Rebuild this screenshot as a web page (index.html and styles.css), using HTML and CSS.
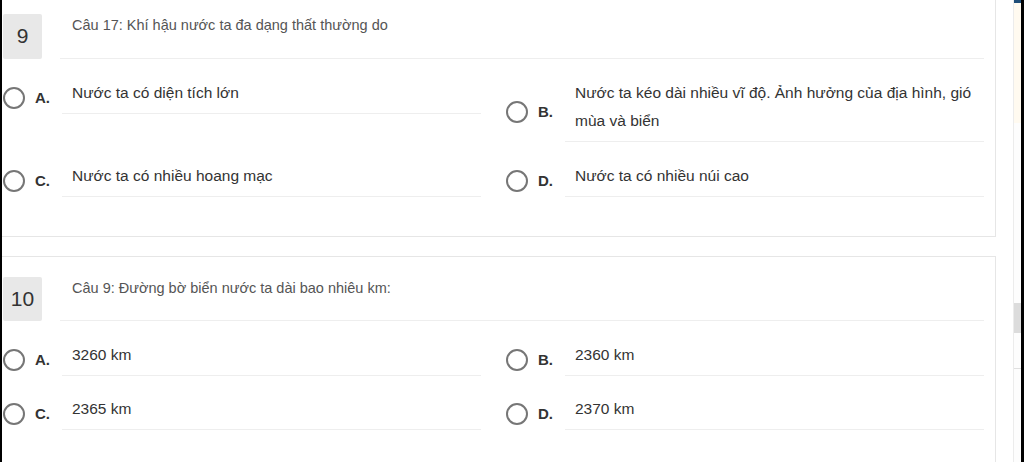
FILE: index.html
```html
<!DOCTYPE html>
<html lang="vi">
<head>
<meta charset="utf-8">
<title>Quiz</title>
<link rel="stylesheet" href="styles.css">
</head>
<body>
<div class="page">
  <div class="edge-left"></div>
  <main class="main">
    <section class="card card-first">
      <div class="q-head">
        <div class="q-num">9</div>
        <div class="q-text">Câu 17: Khí hậu nước ta đa dạng thất thường do</div>
      </div>
      <div class="options">
        <div class="opt">
          <span class="radio"></span><span class="letter">A.</span>
          <div class="opt-text">Nước ta có diện tích lớn</div>
        </div>
        <div class="opt">
          <span class="radio"></span><span class="letter">B.</span>
          <div class="opt-text">Nước ta kéo dài nhiều vĩ độ. Ảnh hưởng của địa hình, gió mùa và biển</div>
        </div>
        <div class="opt">
          <span class="radio"></span><span class="letter">C.</span>
          <div class="opt-text">Nước ta có nhiều hoang mạc</div>
        </div>
        <div class="opt">
          <span class="radio"></span><span class="letter">D.</span>
          <div class="opt-text">Nước ta có nhiều núi cao</div>
        </div>
      </div>
    </section>
    <section class="card card-second">
      <div class="q-head">
        <div class="q-num">10</div>
        <div class="q-text">Câu 9: Đường bờ biển nước ta dài bao nhiêu km:</div>
      </div>
      <div class="options">
        <div class="opt">
          <span class="radio"></span><span class="letter">A.</span>
          <div class="opt-text">3260 km</div>
        </div>
        <div class="opt">
          <span class="radio"></span><span class="letter">B.</span>
          <div class="opt-text">2360 km</div>
        </div>
        <div class="opt">
          <span class="radio"></span><span class="letter">C.</span>
          <div class="opt-text">2365 km</div>
        </div>
        <div class="opt">
          <span class="radio"></span><span class="letter">D.</span>
          <div class="opt-text">2370 km</div>
        </div>
      </div>
    </section>
  </main>
  <aside class="side">
    <div class="side-top"></div>
    <div class="side-gap"></div>
    <div class="side-thumb"></div>
    <div class="side-gap2"></div>
    <div class="side-tick"></div>
  </aside>
  <div class="edge-right"></div>
</div>
</body>
</html>
```

FILE: styles.css
```css
html, body {
  margin: 0;
  padding: 0;
  height: 462px;
  overflow: hidden;
  background: #000;
}

.page {
  display: flex;
  height: 462px;
  font-family: "Liberation Sans", Arial, sans-serif;
  color: #333;
}

.edge-left {
  width: 2px;
  background: #000;
  flex: none;
}

.main {
  flex: none;
  width: 1011px;
  background: #fff;
  overflow: hidden;
}

.card {
  box-sizing: border-box;
  width: 994px;
  border: 1px solid #e6e6e6;
  border-left: none;
  background: #fff;
  padding: 20px 11px 39px 1px;
  margin-top: 19px;
}

.card-first {
  margin-top: -7px;
}

.q-head {
  display: flex;
  align-items: flex-start;
}

.q-num {
  flex: none;
  width: 39px;
  height: 45px;
  background: #e8e8e8;
  border-radius: 2px;
  font-size: 21px;
  line-height: 44px;
  text-align: center;
  color: #333;
}

.q-text {
  flex: 1;
  box-sizing: border-box;
  height: 45px;
  margin-left: 18px;
  padding: 1px 0 0 12px;
  border-bottom: 1px solid #eeeeee;
  font-size: 14.5px;
  line-height: 20px;
  color: #555;
}

.card-second .q-text,
.card-second .q-num {
  height: 44px;
}

.options {
  display: grid;
  grid-template-columns: 478px 478px;
  column-gap: 25px;
  row-gap: 20px;
  align-items: start;
  margin-top: 20px;
}

.card-second .options {
  row-gap: 19px;
}

.opt {
  display: flex;
  align-items: center;
}

.radio {
  flex: none;
  box-sizing: border-box;
  width: 22px;
  height: 22px;
  border: 2px solid #767676;
  border-radius: 50%;
  margin-top: 2px;
}

.letter {
  flex: none;
  width: 27px;
  margin-left: 10px;
  font-weight: bold;
  font-size: 15px;
  color: #333;
  margin-top: 2px;
}

.opt-text {
  flex: 1;
  padding: 0 6px 6px 10px;
  border-bottom: 1px solid #eeeeee;
  font-size: 15.5px;
  line-height: 28px;
  color: #333;
}

.side {
  flex: none;
  width: 8px;
  background: #fdfdfd;
  border-left: 1px solid #ececec;
  box-sizing: border-box;
  display: flex;
  flex-direction: column;
}

.side-top {
  height: 120px;
  background: #fffaf0;
  border-top: 3px solid #1f4e79;
}

.side-gap {
  height: 180px;
}

.side-thumb {
  height: 30px;
  background: #dcdcdc;
}

.side-gap2 {
  height: 35px;
}

.side-tick {
  height: 1px;
  background: #e0e0e0;
}

.edge-right {
  flex: 1;
  background: #000;
}
```
